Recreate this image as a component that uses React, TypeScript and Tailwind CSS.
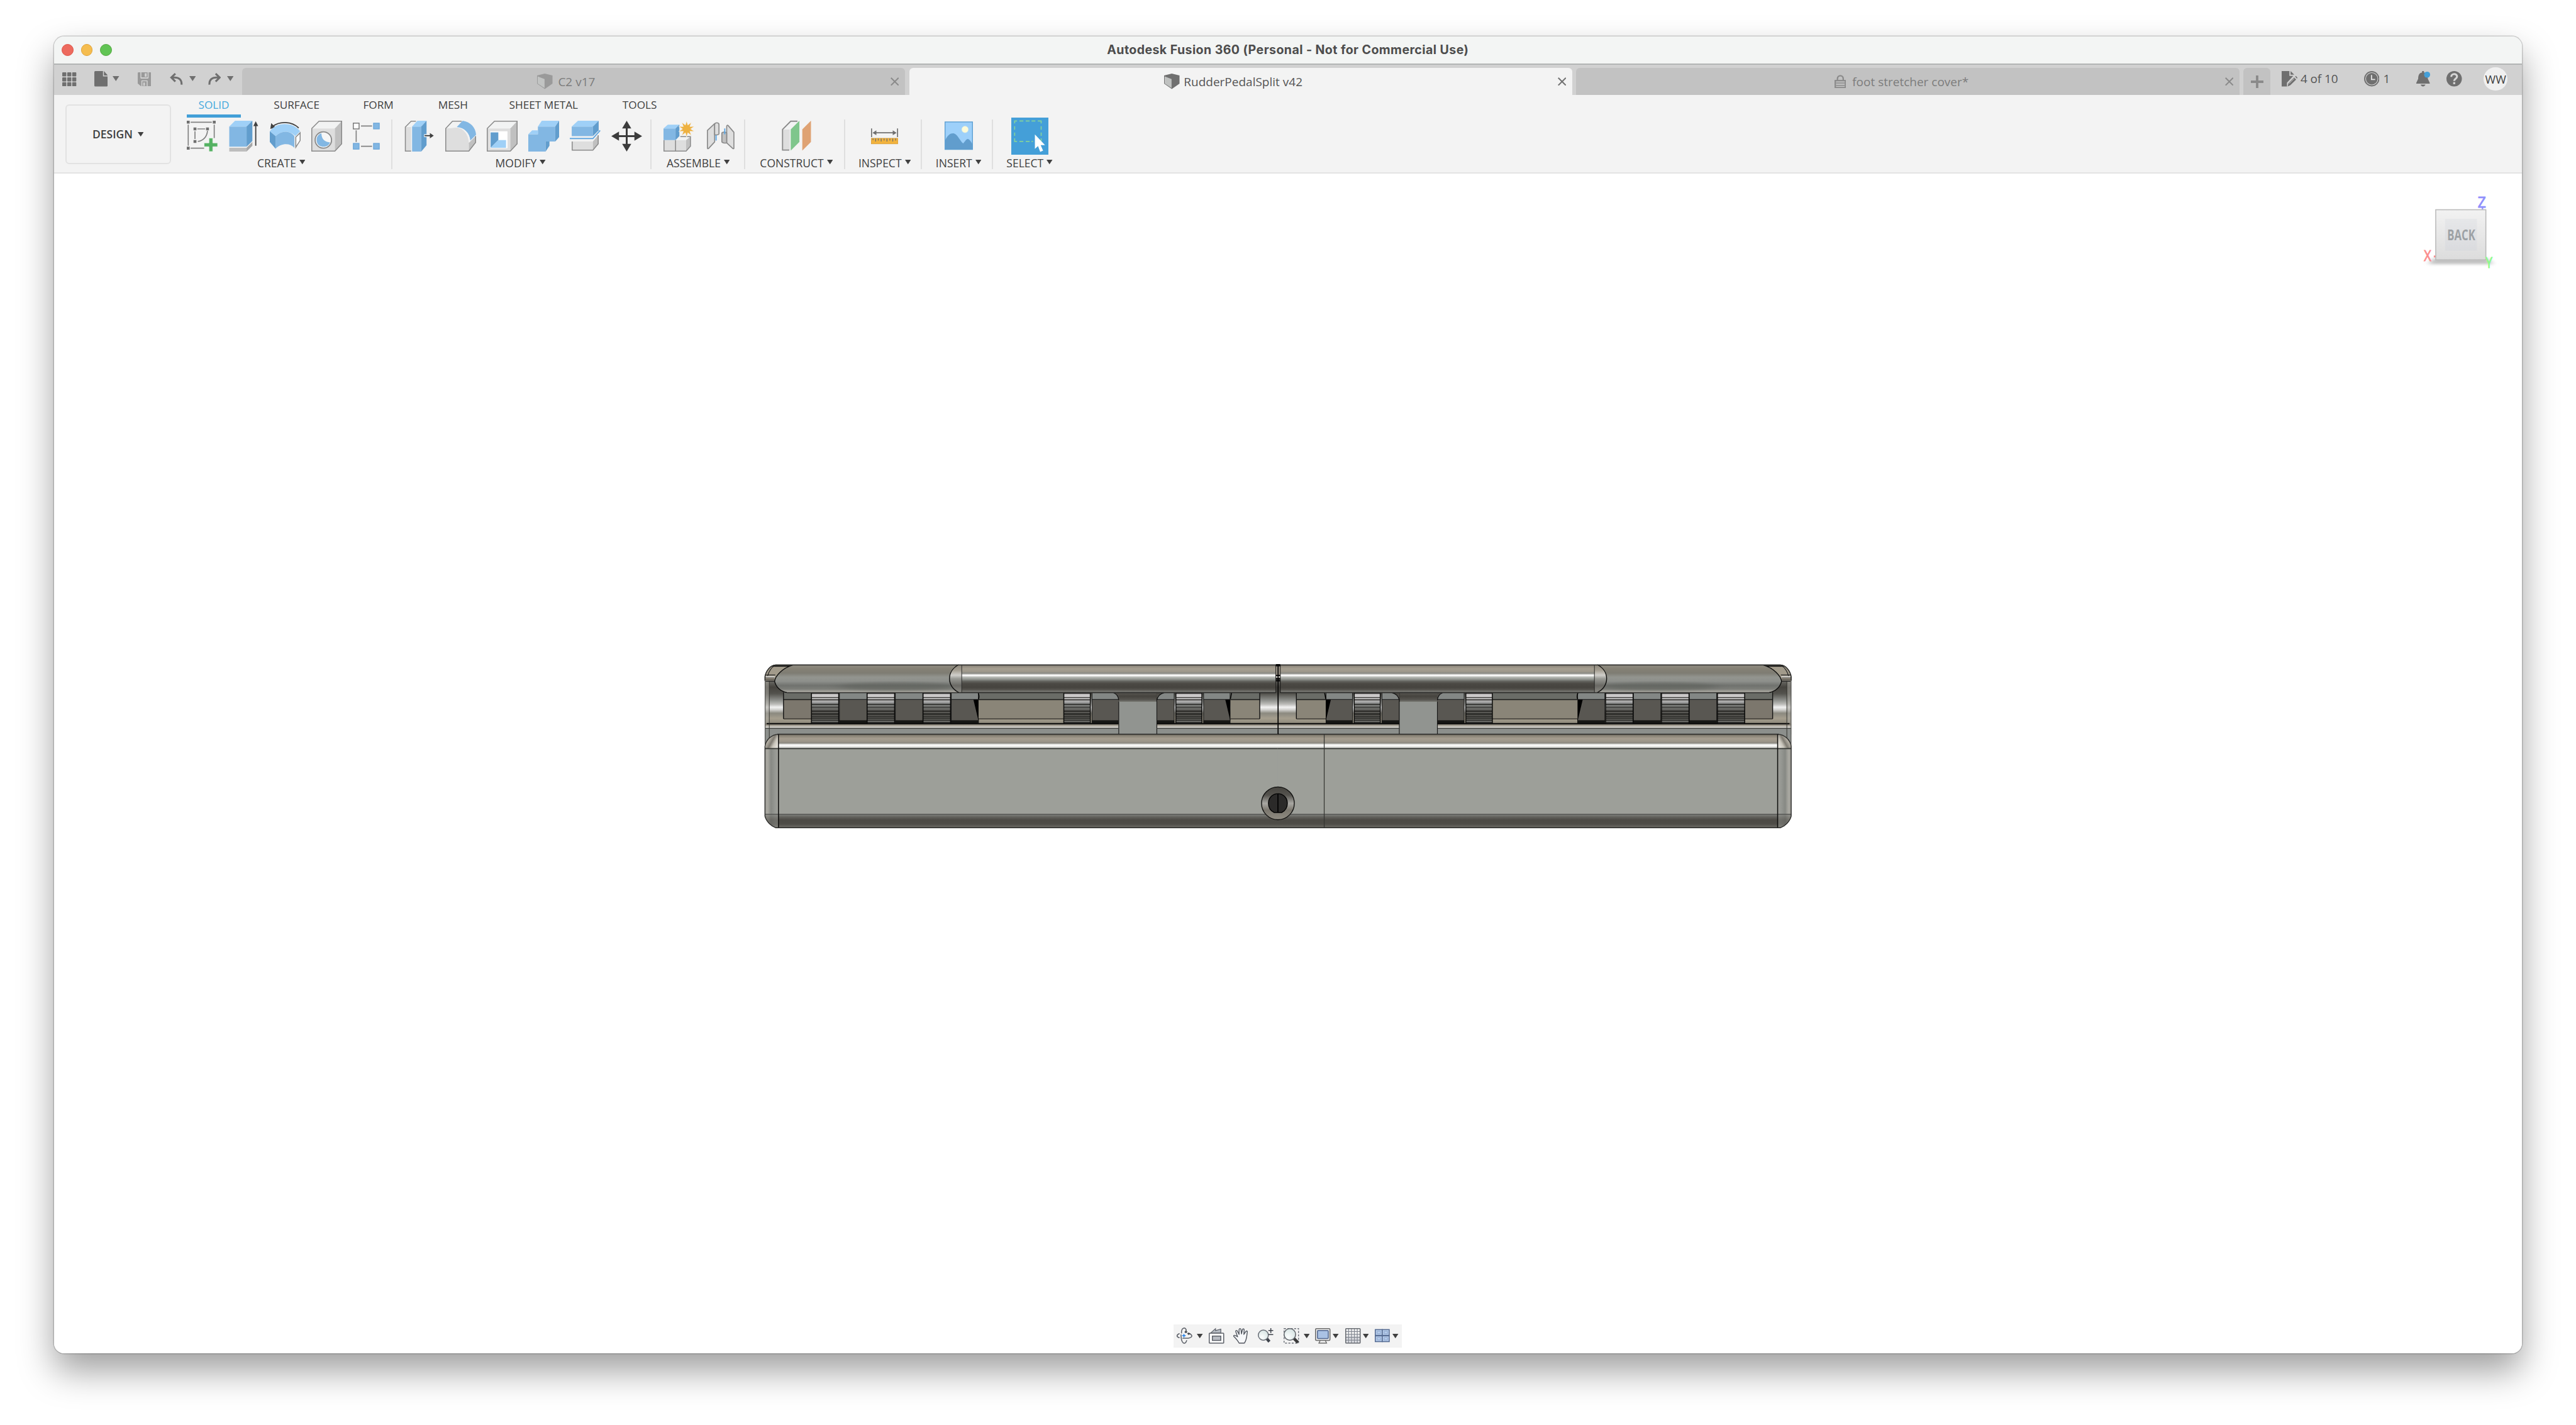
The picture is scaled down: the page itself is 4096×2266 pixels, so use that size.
import React from "react";

const G = "#8a8a8a";
const B1 = "#9fd0f7";
const B2 = "#82b7e3";
const B3 = "#619dcd";
const L1 = "#f2f3f3";
const L2 = "#dedede";
const L3 = "#c0c0c0";
const DK = "#6f6f6f";

type Kids = { children: React.ReactNode };

const Tool = ({ children }: Kids) => (
  <svg viewBox="0 0 64 64" className="h-[49px] w-[49px] shrink-0 overflow-visible" fill="none">
    {children}
  </svg>
);

const Caret = ({ className = "w-[10px] text-[#404040]" }: { className?: string }) => (
  <svg viewBox="0 0 12 9" className={`h-auto shrink-0 ${className}`}>
    <path d="M0 0H12L6 9Z" fill="currentColor" />
  </svg>
);

/* ---------- ribbon icons ---------- */

const SketchIcon = () => (
  <Tool>
    <g stroke="#808080" strokeWidth="2.2">
      <path d="M8 3H52M3 8V52M57 8V36M8 57H36M22 17H38M17 22V38M43 21C42 33 34 42 23 43" />
    </g>
    <g fill={DK}>
      <path d="M0 0h6v6H0zM54 0h6v6h-6zM0 54h6v6H0zM14 14h6v6h-6zM40 14h6v6h-6zM14 40h6v6h-6z" />
    </g>
    <path d="M46 36h8v10h10v8H54v10h-8V54H36v-8h10z" fill="#55b263" stroke="#f3f3f3" strokeWidth="1" />
  </Tool>
);
const ExtrudeIcon = () => (
  <Tool>
    <path d="M2 56H38V64H2Z" fill="#bdbdbd" />
    <path d="M38 56L50 44V52L38 64Z" fill="#a6a6a6" />
    <path d="M2 12H38V54H2Z" fill={B2} />
    <path d="M2 12L14 0H50L38 12Z" fill={B1} />
    <path d="M38 12L50 0V42L38 54Z" fill={B3} />
    <path d="M57 8V52" stroke="#404040" strokeWidth="2.4" />
    <path d="M57 1L62 11H52Z" fill="#404040" />
  </Tool>
);
const RevolveIcon = () => (
  <Tool>
    <path d="M60 15C46 1 20 0 6 12" stroke="#404040" strokeWidth="2.4" />
    <path d="M1 17L3 5L12 14Z" fill="#404040" />
    <path d="M0 22C14 2 48 2 63 22L53 32C42 20 24 20 12 32Z" fill={B1} />
    <path d="M12 32C24 20 42 20 51 32V56C42 46 24 46 12 58Z" fill={B2} />
    <path d="M0 22L12 32V58L0 44Z" fill={B3} />
    <path d="M54 34L63 25V41L54 55Z" fill="#fff" stroke={G} strokeWidth="2" />
  </Tool>
);
const BoxBody = () => (
  <>
    <path d="M1 16H49V63H1Z" fill={L2} />
    <path d="M1 16L16 1H63L49 16Z" fill={L1} />
    <path d="M49 16L63 1V48L49 63Z" fill={L3} />
    <path d="M1 16L16 1H63V48L49 63H1Z" stroke={G} strokeWidth="2" />
  </>
);
const HoleIcon = () => (
  <Tool>
    <BoxBody />
    <circle cx="25" cy="40" r="17" fill="#f6f6f6" stroke={G} strokeWidth="2.4" />
    <path d="M21 26C21 38 28 44 39 45C36 52 31 54 25 54C16 54 11 47 11 40C11 33 15 28 21 26Z" fill={B2} />
  </Tool>
);
const PatternIcon = () => (
  <Tool>
    <path d="M17 11H40M17 53H40M7 20V44" stroke="#808080" strokeWidth="2.2" />
    <rect x="1" y="5" width="12" height="12" fill="#fff" stroke={DK} strokeWidth="1.8" />
    <g fill={B2} stroke="#6aa5d8" strokeWidth="1.6">
      <rect x="43" y="5" width="12" height="12" />
      <rect x="1" y="47" width="12" height="12" />
      <rect x="43" y="47" width="12" height="12" />
    </g>
  </Tool>
);
const PressPullIcon = () => (
  <Tool>
    <path d="M2 13H14V63H2Z" fill={L2} />
    <path d="M2 13L14 1H25L14 13Z" fill={L1} />
    <path d="M14 63H2V13L14 1H24" stroke={G} strokeWidth="2" />
    <path d="M16 12H35V64H16Z" fill={B2} />
    <path d="M16 12L27 0H46L35 12Z" fill={B1} />
    <path d="M35 12L46 0V51L35 64Z" fill={B3} />
    <path d="M41 31H54" stroke="#fff" strokeWidth="6" />
    <path d="M42 31H54" stroke="#404040" strokeWidth="2.8" />
    <path d="M61 31L53 25.5V36.5Z" fill="#404040" />
  </Tool>
);
const FilletIcon = () => (
  <Tool>
    <path d="M1 16L24 14C38 16 48 28 49 46V63H1Z" fill={L2} />
    <path d="M1 16L15 1H35L24 14Z" fill={L1} />
    <path d="M49 46L63 32V45L49 63Z" fill={L3} />
    <path d="M34 1H15L1 16V63H49L63 45V32" stroke={G} strokeWidth="2" />
    <path d="M24 13L36 0C52 2 63 14 64 29L52 41C51 26 40 14 24 13Z" fill={B2} />
  </Tool>
);
const ShellIcon = () => (
  <Tool>
    <BoxBody />
    <path d="M7 22H43V57H7Z" fill="#fff" />
    <path d="M8 24H24V40L8 56Z" fill={B3} />
    <path d="M8 56L24 40H40V56Z" fill={B1} />
  </Tool>
);
const CombineIcon = () => (
  <Tool>
    <path d="M0 28H20V12H56V43H36V64H0Z" fill={B2} />
    <path d="M20 12L28 0H64L56 12ZM0 28L8 20H20V28Z" fill={B1} />
    <path d="M56 12L64 0V34L56 43ZM36 43H44V52L36 64Z" fill={B3} />
  </Tool>
);
const SplitIcon = () => (
  <Tool>
    <path d="M4 12H48V32H4Z" fill={B2} />
    <path d="M4 12L17 0H60L48 12Z" fill={B1} />
    <path d="M48 12L60 0V20L48 32Z" fill={B3} />
    <path d="M4 43H48V61H4Z" fill={L2} />
    <path d="M48 43L59 30V48L48 61Z" fill={L3} />
    <path d="M5 43V61H48L59 48V30" stroke={G} strokeWidth="2" />
    <path d="M0 37H48L63 20" stroke="#64a8e0" strokeWidth="2.6" />
  </Tool>
);
const MoveIcon = () => (
  <Tool>
    <path d="M32 12V52M12 32H52" stroke="#3c3c3c" strokeWidth="4" />
    <path d="M32 0L41.500 16H22.500ZM32 64L41.500 48H22.500ZM0 32L16 22.500V41.500ZM64 32L48 22.500V41.500Z" fill="#3c3c3c" />
  </Tool>
);
const starPoints = Array.from({ length: 20 }, (_, i) => {
  const r = i % 2 ? 8.5 : 17;
  const a = (i * Math.PI) / 10 - Math.PI / 2;
  return `${48 + r * Math.cos(a)},${17 + r * Math.sin(a)}`;
}).join(" ");
const ComponentIcon = () => (
  <Tool>
    <path d="M1 40H47V63H1Z" fill={L2} />
    <path d="M25 40L33 33H56L47 40Z" fill={L1} />
    <path d="M47 40L56 33V53L47 63Z" fill={L3} />
    <path d="M1 40V63H47L56 53V33H35M25 40V63" stroke={G} strokeWidth="2" />
    <path d="M0 16H25V40H0Z" fill={B2} />
    <path d="M0 16L9 8H33L25 16Z" fill={B1} />
    <path d="M25 16L33 8V32L25 40Z" fill={B3} />
    <polygon points={starPoints} fill="#eeb140" stroke="#f3f3f3" strokeWidth="1" />
  </Tool>
);
const JointIcon = () => (
  <Tool>
    <g stroke={G} strokeWidth="2.2" strokeLinejoin="round">
      <path d="M5 20L20 6V44L8 57C6 59 5 58 5 56Z" fill={L2} />
      <path d="M20 8C20 3 29 3 29 8V27C29 29 24 30 20 29Z" fill={L2} />
      <path d="M45 12C45 9 47 9 48 10L60 24V57C60 59 58 58 57 57L45 46Z" fill={L2} />
      <path d="M35 26C35 23 45 23 45 26V46C41 47 35 46 35 43Z" fill={L3} />
    </g>
    <path d="M23 30V41M41 16V28" stroke="#5aa7e6" strokeWidth="2.4" />
  </Tool>
);
const ConstructIcon = () => (
  <Tool>
    <path d="M3 18H18V61H3Z" fill={L2} />
    <path d="M3 18L20 1H36L18 18Z" fill={L1} />
    <path d="M17 61H3V18L20 1H34" stroke={G} strokeWidth="2.4" />
    <path d="M20 18L38 0V44L20 62Z" fill="#7fc68c" />
    <path d="M44 18L62 0V44L44 62Z" fill="#dfa273" />
  </Tool>
);
const InspectIcon = () => (
  <Tool>
    <path d="M5 16V34M59 16V34M9 25H55" stroke={DK} strokeWidth="2.2" />
    <path d="M7 25L15 20V30ZM57 25L49 20V30Z" fill={DK} />
    <rect x="4.500" y="36.500" width="55" height="11.500" fill="#f2b33d" stroke="#d89a30" />
    <path d="M8 37v3M13.500 37v6M19 37v4M25 37v6M31 37v4M37 37v6M43 37v4M49 37v6M55 37v4" stroke={DK} strokeWidth="1.7" />
  </Tool>
);
const InsertIcon = () => (
  <Tool>
    <rect x="3.500" y="2.500" width="57" height="57" fill="#9dd0fa" />
    <path d="M4 40C9 30 14 26 20 26C30 27 34 42 41 47C45 44 47 38 51 38C55 39 57 43 60 48V60H4Z" fill={B3} />
    <circle cx="45" cy="18" r="7" fill="#fdfbd8" stroke="#c9e1e6" />
    <rect x="3.500" y="2.500" width="57" height="57" stroke="#5d9fd2" strokeWidth="1.800" />
  </Tool>
);
const SelectIcon = () => (
  <svg viewBox="0 0 77 77" className="h-[59px] w-[59px] shrink-0" fill="none">
    <rect width="77" height="77" fill="#449fd8" />
    <path d="M7 12V7H12M17 7h8M30 7h8M42 7h8M55 7H62V12M62 18v7M62 31v7M7 18v7M7 31v7M7 43V49.500H12M17 49.500h8M30 49.500h8M42 49.500h3M62 43v6" stroke="#84d29c" strokeWidth="2.200" />
    <path d="M49 35V65L55.500 59L60 71L66 68.500L61 57H70Z" fill="#fff" />
  </svg>
);

/* ---------- quick access bar ---------- */

const CubeIcon = ({ dark }: { dark: boolean }) => (
  <svg viewBox="0 0 32 32" className="h-[24.500px] w-[24.500px] shrink-0">
    <path d="M0 4L16 0L32 4V21L16 32L0 21Z" fill={dark ? "#707070" : "#9a9a9a"} />
    <path d="M1.200 6L15.500 11.500V30L1.200 20.500Z" fill={dark ? "#bfc1c0" : "#c2c4c3"} />
  </svg>
);
const LockIcon = () => (
  <svg viewBox="0 0 24 28" className="h-[21.500px] w-[18.500px] shrink-0" fill="none" stroke="#8b8b8b">
    <path d="M6 11V8.500C6 -.5 18 -.5 18 8.500V11" strokeWidth="3" />
    <rect x="1.500" y="12" width="21" height="14.500" strokeWidth="3" />
    <path d="M3 17H21M3 21.800H21" strokeWidth="2" />
  </svg>
);
const CloseIcon = ({ dark }: { dark: boolean }) => (
  <svg viewBox="0 0 18 18" className="mr-[10px] h-[13.500px] w-[13.500px] shrink-0" stroke={dark ? "#707070" : "#8a8a8a"} strokeWidth="2.600">
    <path d="M1 1L17 17M17 1L1 17" />
  </svg>
);

const Tab = ({ label, icon, active = false, gap }: { label: string; icon: React.ReactNode; active?: boolean; gap: string }) => (
  <div
    className={`flex h-[43px] w-[1054.700px] shrink-0 items-center rounded-t-[6px] font-['Open_Sans',sans-serif] text-[19px] ${
      active ? "bg-[#f3f3f3] text-[#555555]" : "bg-[#c2c2c2] text-[#7c7c7c]"
    }`}
  >
    <div className={`flex flex-1 items-center justify-center ${gap}`}>
      {icon}
      <span className="mt-[1px] whitespace-nowrap leading-none">{label}</span>
    </div>
    <CloseIcon dark={active} />
  </div>
);

const QuickAccess = () => (
  <div className="flex h-[46px] w-[298.800px] shrink-0 items-center pb-[5px] pl-[13.300px] text-[#6f6f6f]">
    <svg viewBox="0 0 29 29" className="mt-[1px] h-[22.300px] w-[22.300px]" fill="currentColor">
      {[0, 10.3, 20.6].map((y) =>
        [0, 10.3, 20.6].map((x) => <rect key={`${x}-${y}`} x={x} y={y} width="8.400" height="8.400" rx="1.200" />),
      )}
    </svg>
    <svg viewBox="0 0 28 32" className="ml-[28px] h-[24.500px] w-[21.400px]" fill="currentColor">
      <path d="M2 0H18V11H28V30Q28 32 26 32H2Q0 32 0 30V2Q0 0 2 0Z" />
      <path d="M20 0L28 9H20Z" />
    </svg>
    <Caret className="mb-[1px] ml-[8.500px] w-[10.500px]" />
    <svg viewBox="0 0 28 29" className="ml-[29px] mt-[1px] h-[22.300px] w-[21.500px]" fill="#999999">
      <path fillRule="evenodd" d="M1.500 0H26.500Q28 0 28 1.500V27.500Q28 29 26.500 29H7L0 23V1.500Q0 0 1.500 0ZM5.500 0V11Q5.500 13 7.500 13H20.500Q22.500 13 22.500 11V0H20.500V10.500H7.500V0ZM7.500 28.500H9.500V18.500H18.500V28.500H20.500V18Q20.500 16.500 19 16.500H9Q7.500 16.500 7.500 18Z" />
      <path d="M14.500 2h4v7h-4zM11.500 21h3.500v7h-3.500z" fill="#d1d1d1" />
    </svg>
    <svg viewBox="0 0 27 25" className="ml-[29.500px] h-[19px] w-[20.700px]" fill="none" stroke="currentColor" strokeWidth="4">
      <path d="M11.500 1.500L3 9.500L11.500 18M4 9.500H10C19 9.500 25 14 24.500 24.500" />
    </svg>
    <Caret className="mb-[1px] ml-[10px] w-[10.500px]" />
    <svg viewBox="0 0 27 25" className="ml-[19.500px] h-[19px] w-[20.700px]" fill="none" stroke="currentColor" strokeWidth="4">
      <path d="M15.500 1.500L24 9.500L15.500 18M23 9.500H17C8 9.500 2 14 2.500 24.500" />
    </svg>
    <Caret className="mb-[1px] ml-[9.500px] w-[10.500px]" />
  </div>
);

const StatusArea = () => (
  <div className="flex h-[47px] items-center pb-[4px] font-['Open_Sans',sans-serif] text-[19px] leading-none text-[#555555]">
    <svg viewBox="0 0 33 32" className="ml-[18px] h-[24.500px] w-[25.300px] shrink-0" fill="#6f6f6f">
      <path d="M0 0H16V10H24L11 24V32H0Z" />
      <path d="M18.500 0L26 7.500H18.500Z" />
      <path d="M26 13.500L30 17.500L18 29.500L12.500 32L14 25.500ZM28 11.500L29.500 10L33 14L31.500 15.800Z" />
      <path d="M15.500 26L26 15.500" stroke="#d1d1d1" strokeWidth="1.200" />
    </svg>
    <span className="ml-[4.500px] w-[101px] shrink-0 whitespace-nowrap tracking-[-0.100px]">4 of 10</span>
    <svg viewBox="0 0 32 32" className="h-[24.500px] w-[24.500px] shrink-0" fill="none">
      <circle cx="16" cy="16" r="14.700" stroke="#6f6f6f" strokeWidth="2.400" />
      <circle cx="16" cy="16" r="12" fill="#6f6f6f" />
      <path d="M15.500 8V17.500H23" stroke="#e2e2e2" strokeWidth="2.400" />
    </svg>
    <span className="ml-[6px] w-[52.500px] shrink-0">1</span>
    <svg viewBox="0 0 28 32" className="h-[24.500px] w-[21.500px] shrink-0 overflow-visible" fill="#6f6f6f">
      <path d="M12 0h4v3C22 4 24 9 24 16L28 24.500V26H0V24.500L4 16C4 9 6 4 12 3ZM9 28H19C19 30 16 32 14 32C12 32 9 30 9 28Z" />
      <circle cx="22.500" cy="7.500" r="6.300" fill="#449fd8" />
    </svg>
    <svg viewBox="0 0 32 32" className="ml-[27px] h-[24.500px] w-[24.500px] shrink-0" fill="none">
      <circle cx="16" cy="16" r="16" fill="#6f6f6f" />
      <path d="M10 12C10 4.500 22 4.500 22 11.500C22 16 16 16 16 20.500" stroke="#d6d6d6" strokeWidth="4" />
      <rect x="14" y="23" width="4.200" height="4.200" fill="#d6d6d6" />
    </svg>
    <div className="ml-[34.500px] flex h-[37.500px] w-[37.500px] shrink-0 items-center justify-center rounded-full bg-[#f0f0f0] text-[18px] leading-none text-[#3c3c3c]">
      WW
    </div>
  </div>
);

/* ---------- ribbon ---------- */

const RIBBON_TABS: [string, string][] = [
  ["SURFACE", "w-[143.300px]"],
  ["FORM", "w-[116.500px]"],
  ["MESH", "w-[121px]"],
  ["SHEET METAL", "w-[167px]"],
  ["TOOLS", "w-[138.700px]"],
];

const Group = ({ label, width, shift = "", last = false, children }: { label: string; width: string; shift?: string; last?: boolean; children: React.ReactNode }) => (
  <div className={`flex h-full shrink-0 ${width}`}>
    <div className={`flex flex-1 flex-col items-center ${last ? "" : "pl-[5.500px]"}`}>
      <div className="flex h-[59px] items-center gap-[16.900px]">{children}</div>
      <div className={`flex h-[27px] items-center gap-[5px] text-[17.500px] ${shift}`}>
        <span className="whitespace-nowrap leading-none">{label}</span>
        <Caret className="mb-[3px] w-[9.500px]" />
      </div>
    </div>
    {!last && <div className="mt-[3px] h-[79px] w-[2px] bg-[#dfdfdf]" />}
  </div>
);

const Ribbon = () => (
  <div className="flex h-[125px] shrink-0 border-b-2 border-[#e3e3e3] bg-[#f3f3f3] font-['Open_Sans',sans-serif] text-[#404040]">
    <div className="ml-[17.500px] mt-[15px] flex h-[94.500px] w-[168.500px] shrink-0 items-center justify-center gap-[8px] rounded-[6px] border-2 border-[#e2e2e2] text-[17.500px] font-semibold">
      <span className="leading-none">DESIGN</span>
      <Caret className="w-[9.500px]" />
    </div>
    <div className="ml-[7px] flex flex-col">
      <div className="flex h-[36px] pl-[18px] text-[17.200px]">
        <div className="mr-[17px] flex h-[36px] w-[86px] items-center justify-center border-b-[5.500px] border-[#429fd7] pt-[1px] text-[#45a9dd]">
          <span className="leading-none">SOLID</span>
        </div>
        {RIBBON_TABS.map(([name, width]) => (
          <div key={name} className={`flex h-[32px] items-center justify-center ${width}`}>
            <span className="whitespace-nowrap leading-none">{name}</span>
          </div>
        ))}
      </div>
      <div className="flex h-[86px]">
        <Group label="CREATE" width="w-[345px]" shift="mr-[12px]">
          <SketchIcon />
          <ExtrudeIcon />
          <RevolveIcon />
          <HoleIcon />
          <PatternIcon />
        </Group>
        <Group label="MODIFY" width="w-[412px]" shift="mr-[8px]">
          <PressPullIcon />
          <FilletIcon />
          <ShellIcon />
          <CombineIcon />
          <SplitIcon />
          <MoveIcon />
        </Group>
        <Group label="ASSEMBLE" width="w-[149px]" shift="mr-[4px]">
          <ComponentIcon />
          <JointIcon />
        </Group>
        <Group label="CONSTRUCT" width="w-[159px]">
          <ConstructIcon />
        </Group>
        <Group label="INSPECT" width="w-[121.500px]">
          <InspectIcon />
        </Group>
        <Group label="INSERT" width="w-[113.500px]">
          <InsertIcon />
        </Group>
        <Group label="SELECT" width="w-[116px]" last>
          <SelectIcon />
        </Group>
      </div>
    </div>
  </div>
);

/* ---------- model ---------- */

const Grad = ({ id, y1, y2, stops }: { id: string; y1: number; y2: number; stops: [number, string][] }) => (
  <linearGradient id={id} gradientUnits="userSpaceOnUse" x1="0" x2="0" y1={y1} y2={y2}>
    {stops.map(([o, c]) => (
      <stop key={o} offset={o} stopColor={c} />
    ))}
  </linearGradient>
);

const KNURL_LINES: [number, number][] = [
  [1438, 2.5], [1447, 1.6], [1451.5, 2], [1461, 2], [1467, 1.2], [1475, 2.2], [1481, 2.4], [1487, 1.6], [1490.5, 1.4], [1494, 1.6], [1498.5, 2],
];

const Knurl = ({ x, w }: { x: number; w: number }) => (
  <g>
    <rect x={x} y="1436" width={w} height="65" fill="url(#knurl)" />
    {KNURL_LINES.map(([y, s]) => (
      <rect key={y} x={x} y={y - s / 2} width={w} height={s} fill="#161614" opacity="0.85" />
    ))}
    <path d={`M${x} 1436V1501M${x + w} 1436V1501`} stroke="#0c0c0b" strokeWidth="2" />
  </g>
);

const Block = ({ x, w }: { x: number; w: number }) => (
  <g>
    <rect x={x} y="1436" width={w} height="15" fill="#838785" />
    <rect x={x} y="1451" width={w} height="44" fill="#595752" />
    <rect x={x} y="1494" width={w} height="7" fill="#171715" />
    <path d={`M${x} 1451H${x + w}`} stroke="#222" strokeWidth="1.5" />
    <path d={`M${x} 1436V1501M${x + w} 1436V1501`} stroke="#111" strokeWidth="1.3" />
  </g>
);

const Recess = ({ x, w, fill }: { x: number; w: number; fill: string }) => (
  <g>
    <rect x={x} y="1436" width={w} height="15" fill="#6a6c67" />
    <rect x={x} y="1451" width={w} height="40" fill={fill} />
    <path d={`M${x} 1451H${x + w}`} stroke="#1c1c1a" strokeWidth="2" />
    <path d={`M${x} 1491H${x + w}`} stroke="#2c2a26" strokeWidth="1.6" />
  </g>
);

const Half = () => (
  <g fill="none">
    {/* channel backing and shelf */}
    <path d="M1586.500 1404C1590 1390 1598 1379 1608 1378.700H2652V1523H1586.500Z" fill="url(#column)" />
    <rect x="1586.500" y="1501" width="1065.500" height="10" fill="url(#shelf)" />
    <rect x="1586.500" y="1511" width="1065.500" height="12" fill="#8c8f8c" />
    <rect x="1586.500" y="1522" width="28" height="30" fill="#8c8f8c" />
    <rect x="1586.500" y="1412" width="9" height="88" fill="#a5a49d" opacity="0.55" />
    <Recess x={1625} w={58} fill="#7c776d" />
    <path d="M1625 1436V1491" stroke="#111" strokeWidth="1.800" />
    <Knurl x={1683} w={56.5} />
    <Block x={1741} w={57} />
    <Knurl x={1798.5} w={57} />
    <Block x={1857} w={57} />
    <Knurl x={1914.5} w={57} />
    <Block x={1973} w={56.5} />
    <Recess x={2029.5} w={177} fill="#8a8578" />
    <path d="M2019 1451H2029.500V1495Z" fill="#000" />
    <path d="M2029 1437C2031 1442 2031 1446 2029.500 1450" stroke="#000" strokeWidth="2" />
    <Knurl x={2206.5} w={55} />
    <Block x={2265} w={56} />
    <rect x="2320.500" y="1436" width="79" height="20" fill="url(#neck)" />
    <path d="M2310 1436H2321V1451C2319 1443 2316 1440 2310 1436Z" fill="#504e49" />
    <Block x={2399.5} w={36} />
    <path d="M2399 1436H2415C2406 1439 2401 1443 2399 1451Z" fill="#4d4b46" />
    <path d="M2415 1436.500C2405 1439 2401 1444 2399.500 1452M2309 1436.500C2317 1440 2320 1445 2320.500 1452" stroke="#111" strokeWidth="1.600" />
    <Knurl x={2439} w={54} />
    <Block x={2496.5} w={55} />
    <Recess x={2552} w={61} fill="#8a8578" />
    <path d="M2541.500 1451H2552V1495Z" fill="#000" />
    <path d="M2554.500 1437L2552 1450" stroke="#000" strokeWidth="2" />
    <path d="M2613 1436V1491" stroke="#111" strokeWidth="1.800" />
    {/* support post */}
    <rect x="2320.500" y="1455.500" width="79" height="67.500" fill="#919490" />
    <path d="M2320.500 1455.500V1523M2399.500 1452V1523" stroke="#1a1a19" strokeWidth="1.500" />
    {/* shelf edges */}
    <path d="M1590 1501H2320M2399.500 1501H2652" stroke="#080808" strokeWidth="2.400" />
    <path d="M1586.500 1511H2320M2399.500 1511H2652" stroke="#3c3c3a" strokeWidth="1.500" />
    <path d="M1595.500 1412V1536" stroke="#33332f" strokeWidth="1.300" />
    {/* outer rod */}
    <path d="M1586.500 1404C1588 1392 1598 1379 1608 1378.700H1644L1612 1412H1586.500Z" fill="#a29b8b" />
    <path d="M1588 1400H1608M1586.500 1406H1606M1587 1410H1606M1588 1413H1606" stroke="#222" strokeWidth="1.600" />
    <rect x="1588" y="1402" width="19" height="3.500" fill="#c8c6c0" />
    <path d="M1602 1381.500H1640" stroke="#111" strokeWidth="2.600" />
    <path d="M1644 1379.500C1622 1386 1608 1402 1606.500 1413C1609 1424 1618 1434 1632 1436.500H1992V1379Z" fill="url(#outerRod)" />
    <ellipse cx="1860" cy="1424" rx="120" ry="9" fill="#4f524e" opacity="0.35" filter="url(#soft)" />
    <path d="M1644 1379.500C1622 1386 1608 1402 1606.500 1413C1609 1424 1618 1434 1632 1436.500" stroke="#0d0d0c" strokeWidth="1.800" />
    <path d="M1586.500 1412V1404C1588 1392 1598 1379.500 1608 1379.300" stroke="#2b2b29" strokeWidth="2" />
    <path d="M1592 1402C1594 1394 1600 1384 1606 1381" stroke="#222" strokeWidth="1.400" />
    {/* inner rod */}
    <rect x="1994" y="1378.700" width="652" height="57.600" fill="url(#rod)" />
    <path d="M1994.500 1378.700H1988C1964 1392 1964 1424 1988 1436.300H1994.500Z" fill="url(#cap)" />
    <path d="M1988.500 1378.700C1963 1392 1963 1424 1988.500 1436.300" stroke="#0d0d0c" strokeWidth="1.800" />
    <path d="M1994.700 1379V1436" stroke="#2d2d2b" strokeWidth="1.300" />
    <path d="M1608 1379.300H2652" stroke="#333331" strokeWidth="2.200" />
    <path d="M1632 1436.700H2646" stroke="#2b2b29" strokeWidth="2" />
    <path d="M2646.500 1379V1437" stroke="#1a1a19" strokeWidth="1.500" />
    {/* base body */}
    <path d="M1586.500 1548C1589 1534 1600 1523.500 1614.600 1523H2652V1553H1586.500Z" fill="url(#baseTop)" />
    <path d="M1586.500 1548C1589 1534 1600 1523.500 1614.600 1523V1553H1586.500Z" fill="url(#corner)" />
    <rect x="1586.500" y="1553" width="1065.500" height="137" fill="#9d9f99" />
    <rect x="1586.500" y="1553" width="28" height="137" fill="url(#side)" />
    <path d="M1586.500 1689H2652V1717H1609C1598 1713 1588 1702 1586.500 1691Z" fill="url(#baseBottom)" />
    <path d="M1586.500 1689H1614V1717H1609C1598 1713 1588 1702 1586.500 1691Z" fill="url(#side)" opacity="0.45" />
    <path d="M1612 1523H2652" stroke="#2a2a28" strokeWidth="2" />
    <path d="M1586.500 1552.800H2652" stroke="#343633" strokeWidth="2.200" />
    <path d="M1586.500 1689H2652" stroke="#4a4b48" strokeWidth="1.600" />
    <path d="M1614.600 1523V1717" stroke="#0c0c0b" strokeWidth="2" />
    <path d="M1614.600 1523C1600 1523.500 1589 1534 1586.500 1548V1693C1589 1704 1600 1714 1609 1717H2652" stroke="#2a2a28" strokeWidth="1.800" />
    <path d="M1586.800 1412V1550" stroke="#555552" strokeWidth="1.600" />
  </g>
);

const Model = () => (
  <svg viewBox="1560 1350 2180 400" className="absolute left-[1109.700px] top-[758.700px] h-[306.600px] w-[1670.900px]">
    <defs>
      <filter id="soft">
        <feGaussianBlur stdDeviation="14 3" />
      </filter>
      <Grad id="rod" y1={1378.7} y2={1436.3} stops={[[0, "#6f6b62"], [0.04, "#8e887c"], [0.14, "#a69f91"], [0.24, "#9f998c"], [0.31, "#8a8b85"], [0.345, "#c2c2be"], [0.37, "#ffffff"], [0.4, "#f2f2f0"], [0.45, "#b4b7b2"], [0.52, "#949893"], [0.6, "#62625d"], [0.68, "#4b4944"], [0.82, "#46443f"], [0.9, "#55534e"], [0.97, "#7b7b76"], [1, "#5a5a56"]]} />
      <Grad id="cap" y1={1378.7} y2={1436.3} stops={[[0, "#8d877b"], [0.2, "#a59f92"], [0.38, "#d0cfcb"], [0.5, "#9a9b96"], [0.75, "#6a6964"], [1, "#8b8a84"]]} />
      <Grad id="outerRod" y1={1378.7} y2={1436.3} stops={[[0, "#918d82"], [0.15, "#858175"], [0.3, "#7e7c73"], [0.45, "#93958f"], [0.6, "#8d8f8b"], [0.75, "#70726e"], [0.88, "#7d7e79"], [0.96, "#a3a29b"], [1, "#b5b3aa"]]} />
      <Grad id="column" y1={1412} y2={1500.7} stops={[[0, "#6c6b66"], [0.15, "#45433e"], [0.3, "#53524d"], [0.45, "#8c8e8a"], [0.55, "#bdbdba"], [0.62, "#f2f2f2"], [0.68, "#cfcfcc"], [0.76, "#8b897f"], [0.88, "#a59e8e"], [1, "#8d887a"]]} />
      <Grad id="shelf" y1={1501} y2={1511} stops={[[0, "#7d776a"], [0.4, "#a59f94"], [0.7, "#d0cec9"], [1, "#a9aaa6"]]} />
      <Grad id="neck" y1={1436} y2={1456} stops={[[0, "#5c5a55"], [0.4, "#45433e"], [0.75, "#56544f"], [1, "#777872"]]} />
      <Grad id="knurl" y1={1436} y2={1501} stops={[[0, "#cfcdcd"], [0.17, "#c6c4c4"], [0.3, "#a9a9a9"], [0.36, "#858786"], [0.46, "#6f706d"], [0.6, "#5c5b57"], [0.75, "#4e4d49"], [0.9, "#6b6b67"], [1, "#6f6f6c"]]} />
      <Grad id="baseTop" y1={1523} y2={1553} stops={[[0, "#6f695e"], [0.12, "#8b8578"], [0.3, "#a59d8f"], [0.5, "#9b9589"], [0.62, "#8b8881"], [0.68, "#d8d8d5"], [0.76, "#ffffff"], [0.85, "#e8e8e6"], [1, "#b0b2ae"]]} />
      <Grad id="baseBottom" y1={1689} y2={1717} stops={[[0, "#838581"], [0.2, "#62615c"], [0.42, "#4c4a45"], [0.72, "#4e4c47"], [1, "#6f6e68"]]} />
      <linearGradient id="side" x1="0" x2="1" y1="0" y2="0">
        <stop offset="0" stopColor="#9d9c96" />
        <stop offset="0.2" stopColor="#a9a8a1" />
        <stop offset="0.45" stopColor="#878984" />
        <stop offset="0.75" stopColor="#969893" />
        <stop offset="1" stopColor="#9fa09a" />
      </linearGradient>
      <linearGradient id="corner" x1="0" x2="1" y1="0" y2="0.6">
        <stop offset="0" stopColor="#8f8c84" />
        <stop offset="0.35" stopColor="#b9b4a9" />
        <stop offset="0.6" stopColor="#7f7b72" />
        <stop offset="0.8" stopColor="#c9c5bb" />
        <stop offset="1" stopColor="#e0ddd6" />
      </linearGradient>
      <Grad id="screw" y1={1632} y2={1701} stops={[[0, "#45433e"], [0.25, "#55534e"], [0.5, "#a9a8a3"], [0.7, "#7b776e"], [1, "#918d83"]]} />
    </defs>
    <Half />
    <g transform="translate(5302 0) scale(-1 1)">
      <Half />
    </g>
    {/* centre joint */}
    <path d="M2646.500 1380H2655.500" stroke="#000" strokeWidth="5" />
    <rect x="2647" y="1382" width="8" height="18" fill="#9b9487" />
    <rect x="2647" y="1400" width="8" height="6" fill="#c9c7c2" />
    <path d="M2646.500 1401H2655.500M2646.500 1408H2655.500M2646.500 1412H2655.500" stroke="#000" strokeWidth="2.400" />
    <path d="M2651 1379V1523" stroke="#000" strokeWidth="2.200" />
    <path d="M2746.700 1523V1717" stroke="#343532" strokeWidth="1.600" />
    {/* screw */}
    <circle cx="2650.700" cy="1666.300" r="34" fill="url(#screw)" stroke="#0f0f0e" strokeWidth="1.800" />
    <path d="M2643 1685.500H2658.500C2667 1681 2670.300 1674 2670.300 1666C2670.300 1654 2661 1646.300 2650.700 1646.300S2631 1654 2631 1666C2631 1674 2634 1681 2643 1685.500Z" fill="#2b2a29" stroke="#000" strokeWidth="1.800" />
    <path d="M2650.700 1647V1685" stroke="#000" strokeWidth="2.200" />
  </svg>
);

const ViewCube = () => (
  <svg viewBox="5010 390 200 180" className="absolute right-[16.200px] top-[22.900px] h-[138px] w-[153.300px]" fontFamily="'Open Sans', sans-serif">
    <defs>
      <linearGradient id="cubeFace" x1="0" x2="0" y1="0" y2="1">
        <stop offset="0" stopColor="#f2f2f2" />
        <stop offset="1" stopColor="#dcdcdc" />
      </linearGradient>
      <linearGradient id="cubePad" x1="0" x2="0" y1="0" y2="1">
        <stop offset="0" stopColor="#e6e7e9" />
        <stop offset="1" stopColor="#dadbde" />
      </linearGradient>
      <filter id="cubeShadow" x="-20%" y="-80%" width="140%" height="260%">
        <feGaussianBlur stdDeviation="6 2.500" />
      </filter>
    </defs>
    <path d="M5048 536H5160L5172 548H5038Z" fill="#8d8d8d" opacity="0.550" filter="url(#cubeShadow)" />
    <path d="M5150 428V434" stroke="#8f8ffc" strokeWidth="3" />
    <path d="M5049 532H5053" stroke="#fb8d8d" strokeWidth="4" />
    <rect x="5053" y="435" width="104" height="104" fill="url(#cubeFace)" stroke="#b9b9b9" strokeWidth="2" />
    <rect x="5072.500" y="454" width="66" height="66" fill="url(#cubePad)" />
    <text x="5077" y="498" fontSize="30" fontWeight="700" fill="#9da1a5" textLength="58" lengthAdjust="spacingAndGlyphs">BACK</text>
    <text x="5140" y="430" fontSize="32" fill="#8f8ffc" stroke="#8f8ffc" strokeWidth="1.200" textLength="17" lengthAdjust="spacingAndGlyphs">Z</text>
    <text x="5028.500" y="541.500" fontSize="30" fill="#fb8d8d" stroke="#fb8d8d" strokeWidth="1.200" textLength="15" lengthAdjust="spacingAndGlyphs">X</text>
    <text x="5156.500" y="556" fontSize="30" fill="#8dfb8d" stroke="#8dfb8d" strokeWidth="1.200" textLength="14" lengthAdjust="spacingAndGlyphs">Y</text>
  </svg>
);

/* ---------- navigation bar ---------- */

const Nav = ({ children, gap }: { children: React.ReactNode; gap: string }) => (
  <svg viewBox="0 0 32 32" className={`h-[24.500px] w-[24.500px] shrink-0 overflow-visible ${gap}`} fill="none">
    {children}
  </svg>
);

const NavBar = () => (
  <div className="flex h-[37px] w-[363px] items-center bg-[#f3f3f3]">
    <Nav gap="ml-[5px]">
      <path d="M6 11C-1 14 -1 18 6 20M26 11C33 14 34 19 24 21H12M10 11C9 -3 20 -3 20 6M9 13C9 20 10 27 13 30C16 33 19 31 21 25" stroke="#5c6068" strokeWidth="2" />
      <path d="M15 12V19M11.500 15.500H18.500" stroke="#2f86e8" strokeWidth="2.200" />
      <path d="M19 5V10M16.500 8H22M25 9V14M22 11.500H28" stroke="#3c4048" strokeWidth="2" />
    </Nav>
    <Caret className="ml-[7.500px] w-[9.500px] text-[#404040]" />
    <Nav gap="ml-[9px]">
      <path d="M4 10L14 1V5L25 2V10Z" fill="#b6bcc4" stroke="#5c6068" strokeWidth="1.600" />
      <rect x="1" y="10.500" width="30" height="20.500" rx="1" fill="#fff" stroke="#5c6068" strokeWidth="2" />
      <rect x="7.500" y="16.500" width="17.500" height="9" fill="#b9bdc4" stroke="#5c6068" strokeWidth="2" />
    </Nav>
    <Nav gap="ml-[15px]">
      <path d="M12 31C9 25 5 21 1 17C0 14 4 14 9 18L5 7C5 4 8 4 9 7L12 13L12 3C13 0 15 0 16 3L17 12L19 3C20 1 23 1 22.500 4L22 13L26 7C28 5 30 6 29 9C28 15 28 25 23 31Z" fill="#f7f8fa" stroke="#50555e" strokeWidth="1.800" strokeLinejoin="round" />
    </Nav>
    <Nav gap="ml-[14.500px]">
      <defs>
        <radialGradient id="lens" cx="0.35" cy="0.7" r="0.8">
          <stop offset="0" stopColor="#fbfdfd" />
          <stop offset="1" stopColor="#d3e2e1" />
        </radialGradient>
      </defs>
      <path d="M18 21L24 28" stroke="#3e434b" strokeWidth="6" />
      <circle cx="11.500" cy="14.500" r="10.500" fill="url(#lens)" stroke="#6b7078" strokeWidth="2" />
      <path d="M27 0V10M22 5H32M22 13.500H32" stroke="#3e434b" strokeWidth="2" />
    </Nav>
    <Nav gap="ml-[16px]">
      <path d="M1 1H31V31H1Z" stroke="#6b7078" strokeWidth="1.800" strokeDasharray="4 3" />
      <path d="M21 21L30 30" stroke="#3a3a3a" strokeWidth="6" />
      <circle cx="13" cy="13" r="12" fill="url(#lens)" stroke="#62666c" strokeWidth="2" />
    </Nav>
    <Caret className="ml-[7.500px] w-[9.500px] text-[#404040]" />
    <Nav gap="ml-[9px]">
      <path d="M11 25H21L24 31H8Z" fill="#f2f2f2" stroke="#6b6b6b" strokeWidth="1.800" />
      <rect x="1" y="1" width="30" height="24.500" rx="2" fill="#ececec" stroke="#6b6b6b" strokeWidth="2" />
      <rect x="5" y="5" width="22.500" height="16.500" rx="1.500" fill="#aac2e4" stroke="#52678f" strokeWidth="2" />
    </Nav>
    <Caret className="ml-[3.500px] w-[9.500px] text-[#404040]" />
    <Nav gap="ml-[10px]">
      <path d="M1 1H31V31H1Z" fill="#f6f6f6" />
      <path d="M1 16H31V31H1Z" fill="#c9ccd4" opacity="0.600" />
      <path d="M7 1V31M13 1V31M19 1V31M25 1V31M1 7H31M1 13H31M1 19H31M1 25H31" stroke="#858a94" strokeWidth="1.600" />
      <rect x="1" y="1" width="30" height="30" rx="1" stroke="#666a70" strokeWidth="2" />
    </Nav>
    <Caret className="ml-[3.500px] w-[9.500px] text-[#404040]" />
    <Nav gap="ml-[10px]">
      <g fill="#b8cdea" stroke="#566c93" strokeWidth="2">
        <rect x="1" y="3" width="14.500" height="12" />
        <rect x="15.500" y="3" width="14.500" height="12" />
        <rect x="1" y="16" width="14.500" height="12" />
        <rect x="15.500" y="16" width="14.500" height="12" />
      </g>
      <path d="M5 6.500h7v5H5zM19.500 6.500h7v5h-7zM5 19.500h7v5H5zM19.500 19.500h7v5h-7z" stroke="#8aa5cf" strokeWidth="1.300" />
    </Nav>
    <Caret className="ml-[3.500px] w-[9.500px] text-[#404040]" />
  </div>
);

export default function App() {
  return (
    <div className="h-[2266px] w-[4096px] overflow-hidden bg-white pl-[86px] pt-[57.500px]">
      <div className="flex h-[2094.500px] w-[3923.500px] flex-col overflow-hidden rounded-[16px] bg-white shadow-[0_28px_56px_rgba(0,0,0,0.380),0_0_0_1.500px_rgba(0,0,0,0.170)]">
        <header className="flex h-[45.500px] shrink-0 items-center border-b-2 border-[#b2b5b4] bg-[#f3f5f4]">
          <div className="flex w-[200px] gap-[12.200px] pl-[12px]">
            <span className="h-[18.500px] w-[18.500px] rounded-full border border-[#dd5347] bg-[#ed6a5e]" />
            <span className="h-[18.500px] w-[18.500px] rounded-full border border-[#dfa43c] bg-[#f5bd4f]" />
            <span className="h-[18.500px] w-[18.500px] rounded-full border border-[#51a73e] bg-[#61c454]" />
          </div>
          <h1 className="flex-1 whitespace-nowrap pt-[1px] text-center font-['Inter',sans-serif] text-[19.600px] font-bold leading-none tracking-[0.400px] text-[#4d4d4d]">
            Autodesk Fusion 360 (Personal - Not for Commercial Use)
          </h1>
          <div className="w-[200px]" />
        </header>
        <div className="flex h-[48px] shrink-0 items-end bg-[#d1d1d1]">
          <QuickAccess />
          <div className="flex items-end gap-[6.100px]">
            <Tab label="C2 v17" icon={<CubeIcon dark={false} />} gap="gap-[8.500px]" />
            <Tab label="RudderPedalSplit v42" icon={<CubeIcon dark />} gap="gap-[6.500px]" active />
            <Tab label="foot stretcher cover*" icon={<LockIcon />} gap="gap-[10px] pl-[3px]" />
            <div className="flex h-[43px] w-[43px] items-center justify-center rounded-t-[6px] bg-[#c2c2c2]">
              <svg viewBox="0 0 26 26" className="h-[20px] w-[20px]" stroke="#8a8a8a" strokeWidth="5">
                <path d="M13 0V26M0 13H26" />
              </svg>
            </div>
          </div>
          <StatusArea />
        </div>
        <Ribbon />
        <main className="relative flex flex-1 flex-col items-center justify-end bg-white pb-[9px]">
          <Model />
          <ViewCube />
          <NavBar />
        </main>
      </div>
    </div>
  );
}
